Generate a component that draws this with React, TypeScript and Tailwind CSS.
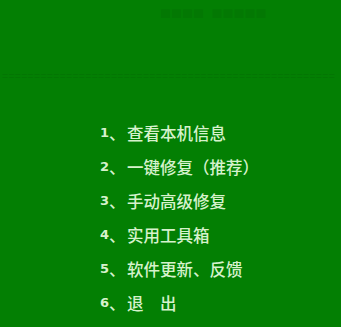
const items = [
  { n: "1", t: "查看本机信息" },
  { n: "2", t: "一键修复（推荐）" },
  { n: "3", t: "手动高级修复" },
  { n: "4", t: "实用工具箱" },
  { n: "5", t: "软件更新、反馈" },
  { n: "6", t: "退\u3000出" },
]

export default function App() {
  return (
    <div
      className="w-[341px] h-[327px] bg-[#037f03] overflow-hidden flex flex-col"
      style={{ fontFamily: '"Noto Sans CJK SC", "DejaVu Sans", sans-serif' }}
    >
      {/* faint header lines, nearly invisible */}
      <div className="pt-[6px] pl-[160px] h-[20px] text-[11px] leading-[14px] text-[#037803] whitespace-nowrap">
        ■■■■&nbsp;&nbsp;&nbsp;■■■■■
      </div>
      <div className="mt-[47px] h-[16px] pl-[2px] text-[11px] leading-[16px] text-[#037503] whitespace-nowrap tracking-[0.3px]">
        ====================================================
      </div>
      <ul className="mt-[40px] pl-[100px] flex flex-col gap-[14px] text-[16.5px] leading-[20px] text-[#d6f2cc] font-medium">
        {items.map((it) => (
          <li key={it.n} className="flex items-center whitespace-nowrap">
            <span className="w-[9px] font-bold text-[13px]" style={{ fontFamily: '"DejaVu Sans", sans-serif' }}>
              {it.n}
            </span>
            <span className="w-[18px]">、</span>
            <span>{it.t}</span>
          </li>
        ))}
      </ul>
    </div>
  )
}
